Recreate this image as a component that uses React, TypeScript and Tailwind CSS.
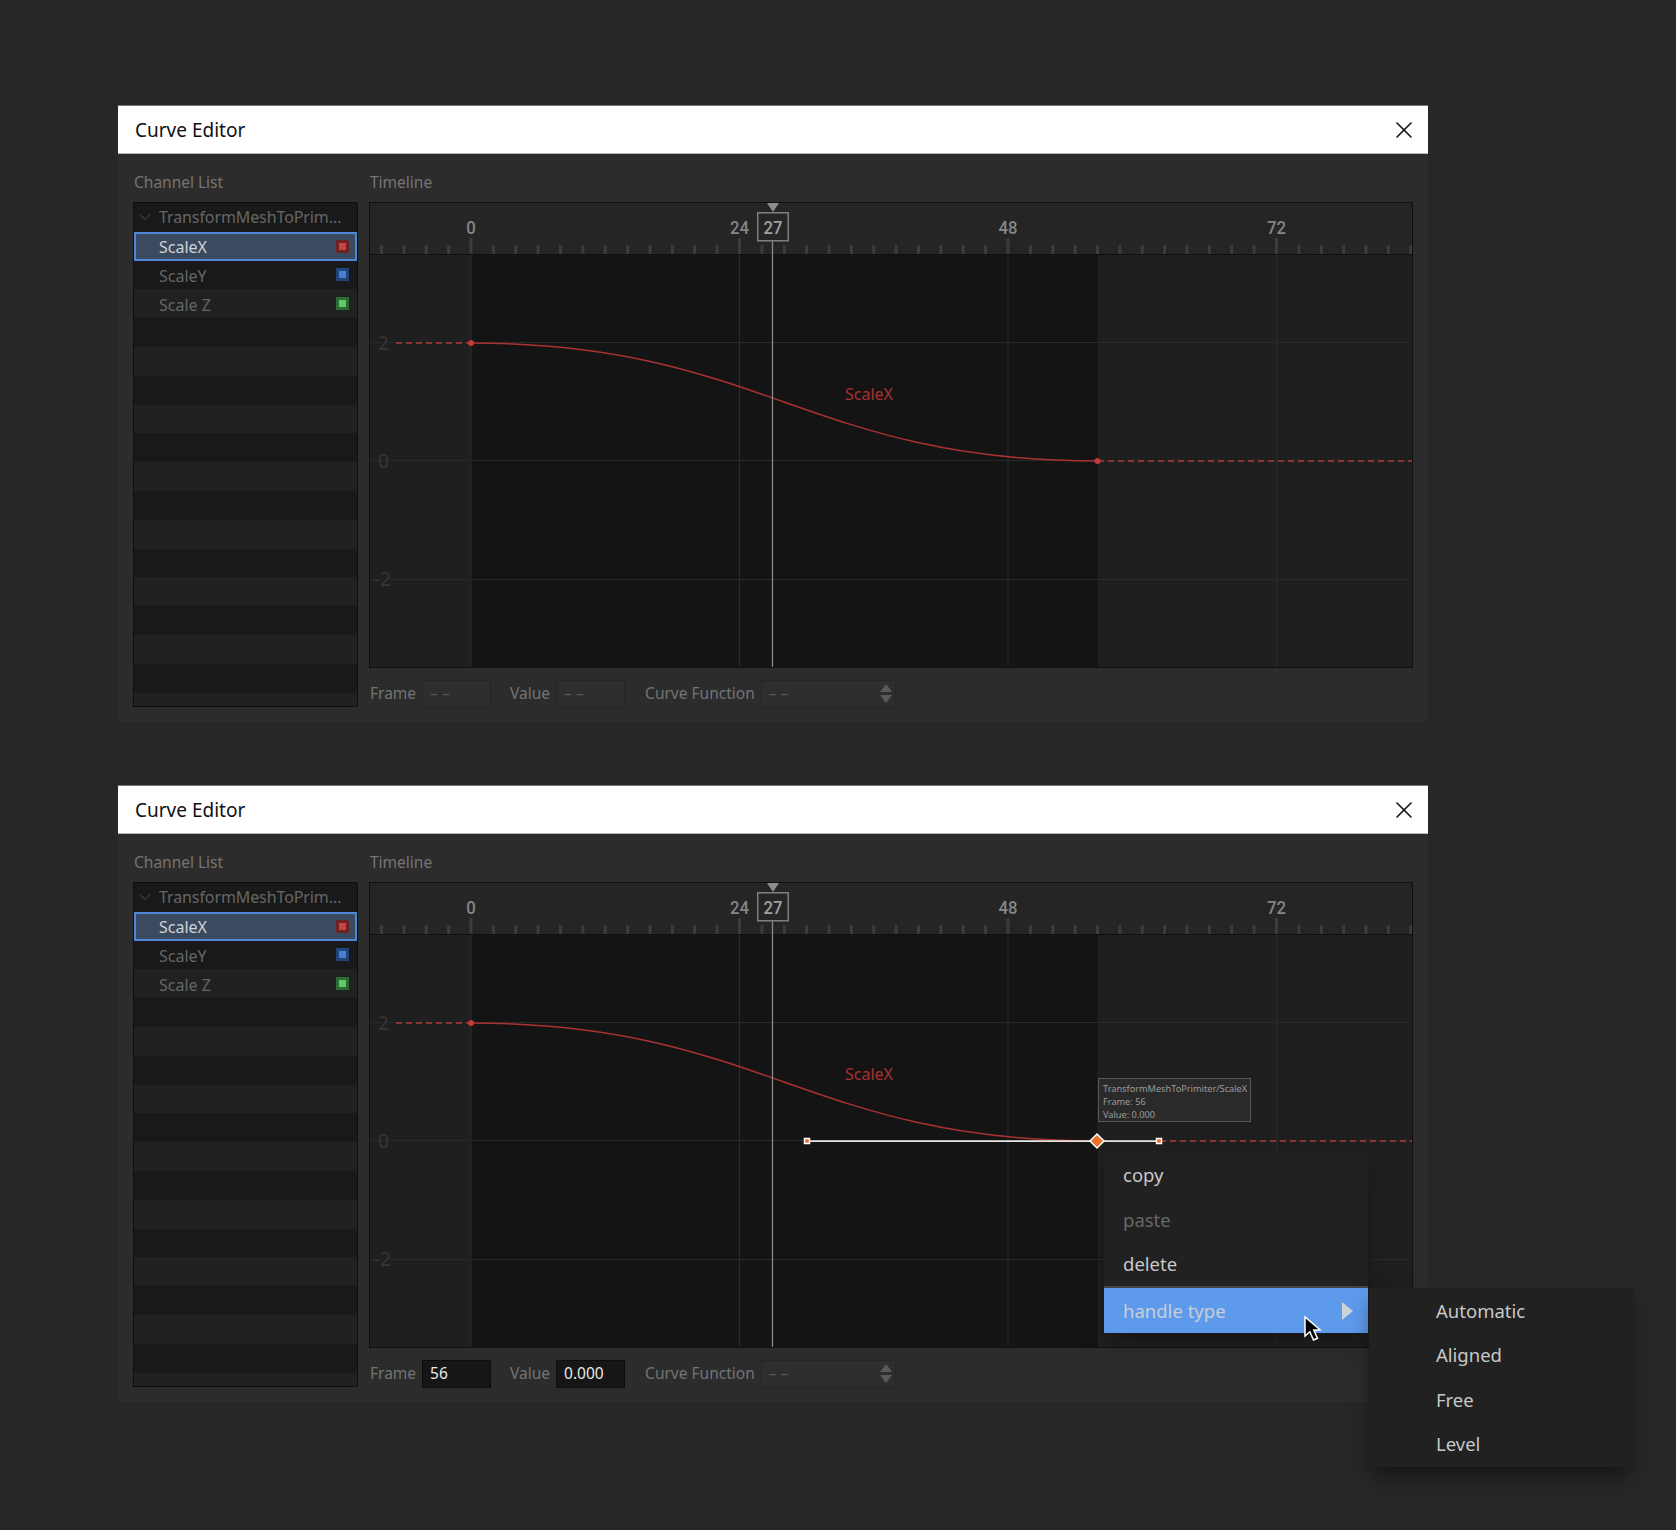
import { X, ChevronDown } from 'lucide-react'

const FRAME = 11.1875
const ORIGIN = 471
const ticks = Array.from({ length: 47 }, (_, i) => (i - 4) * 2)
const rowCount = 18

type Channel = { name: string; outer: string; inner: string }

const channels: Channel[] = [
  { name: 'ScaleX', outer: 'bg-[#6e2222]', inner: 'bg-[#c94343]' },
  { name: 'ScaleY', outer: 'bg-[#1f4579]', inner: 'bg-[#4a80d4]' },
  { name: 'Scale Z', outer: 'bg-[#2b6a33]', inner: 'bg-[#5fcb63]' },
]

function ChannelList() {
  return (
    <div className="h-[505px] overflow-hidden border border-[#0f0f0f] bg-[#19191a]">
      <div className="flex h-[28.8px] items-center text-[#666]">
        <ChevronDown size={20} strokeWidth={1} className="ml-[1px] text-[#5c5c5c]" />
        <span className="ml-[4px] whitespace-nowrap text-[16px] tracking-[-0.1px]">TransformMeshToPrim…</span>
      </div>
      {channels.map((channel, i) => (
        <div
          key={channel.name}
          className={
            i === 0
              ? 'flex h-[28.8px] items-center justify-between border-2 border-[#4f87d6] bg-[#3a4a60] pl-[23px] pr-[6px] text-[16px] text-[#d2d2d2]'
              : i === 1
                ? 'flex h-[28.8px] items-center justify-between pl-[25px] pr-[8px] text-[16px] text-[#666]'
                : 'flex h-[28.8px] items-center justify-between bg-[#212121] pl-[25px] pr-[8px] text-[16px] text-[#666]'
          }
        >
          <span className="pt-[2px]">{channel.name}</span>
          <span className={`flex size-[13px] items-center justify-center ${channel.outer}`}>
            <span className={`size-[7px] ${channel.inner}`} />
          </span>
        </div>
      ))}
      {Array.from({ length: rowCount - 4 }, (_, i) => (
        <div key={i} className={i % 2 === 0 ? 'h-[28.8px]' : 'h-[28.8px] bg-[#212121]'} />
      ))}
    </div>
  )
}

function RulerLabel({ x, text, fill = '#868686' }: { x: number; text: string; fill?: string }) {
  return (
    <text
      x={x}
      y="234"
      fill={fill}
      fontSize="19"
      fontWeight="500"
      textAnchor="middle"
      textLength={text.length * 9.5}
      lengthAdjust="spacingAndGlyphs"
      className="font-['Roboto',sans-serif]"
    >
      {text}
    </text>
  )
}

function Graph({ editing }: { editing: boolean }) {
  return (
    <div className="h-[466px] border border-[#0f0f0f]">
      <svg width="1042" height="464" viewBox="370 203 1042 464" className="block">
        <rect x="370" y="203" width="1042" height="51" fill="#252525" />
        <rect x="370" y="254" width="1042" height="413" fill="#1f1f1f" />
        <rect x={ORIGIN} y="254" width={56 * FRAME} height="413" fill="#141414" />

        {[342.5, 460.5, 579.5].map((y) => (
          <line key={y} x1="370" x2="1412" y1={y} y2={y} stroke="#292929" />
        ))}
        {[0, 24, 48, 72].map((f) => (
          <line key={f} x1={ORIGIN + f * FRAME} x2={ORIGIN + f * FRAME} y1="254" y2="667" stroke="#2b2b2b" />
        ))}

        {ticks.map((f) => (
          <rect
            key={f}
            x={ORIGIN + f * FRAME - 1.5}
            y={f % 24 === 0 ? 238 : 245}
            width="3"
            height={f % 24 === 0 ? 16 : 9}
            fill="#3c3c3c"
          />
        ))}
        <line x1="370" x2="1412" y1="254.5" y2="254.5" stroke="#0f0f0f" />

        <RulerLabel x={ORIGIN} text="0" />
        <RulerLabel x={ORIGIN + 24 * FRAME} text="24" />
        <RulerLabel x={ORIGIN + 48 * FRAME} text="48" />
        <RulerLabel x={ORIGIN + 72 * FRAME} text="72" />

        <g fill="#363636" fontSize="19">
          <text x="378" y="350">2</text>
          <text x="378" y="468">0</text>
          <text x="374" y="586">-2</text>
        </g>

        <line x1="396" x2={ORIGIN} y1="343" y2="343" stroke="#b03a3a" strokeWidth="1.5" strokeDasharray="6 4" />
        <line
          x1={editing ? 1160 : 1098}
          x2="1412"
          y1="461"
          y2="461"
          stroke="#b03a3a"
          strokeWidth="1.5"
          strokeDasharray="6 4"
        />
        <path d="M471 343 C761 343 807 461 1097.5 461" fill="none" stroke="#aa3232" strokeWidth="1.5" />
        <circle cx={ORIGIN} cy="343" r="3" fill="#c33b3b" />
        {!editing && <circle cx="1097.5" cy="461" r="3" fill="#c33b3b" />}

        <text x="845" y="400" fill="#a83232" fontSize="16">ScaleX</text>

        <line x1="772.5" x2="772.5" y1="241" y2="667" stroke="#8c8c8c" strokeWidth="1.25" />
        <path d="M767 203 H779 L773 212 Z" fill="#8c8c8c" />
        <rect x="757.75" y="212.75" width="30.5" height="28" fill="#252525" stroke="#808080" strokeWidth="1.5" />
        <RulerLabel x={773} text="27" fill="#a0a0a0" />

        {editing && (
          <g>
            <line x1="807" x2="1159" y1="461" y2="461" stroke="#e8e4e2" strokeWidth="1.75" />
            <rect x="804.5" y="458.5" width="5" height="5" fill="#e8722a" stroke="#fff" strokeWidth="1.5" />
            <rect x="1156.5" y="458.5" width="5" height="5" fill="#e8722a" stroke="#fff" strokeWidth="1.5" />
            <path d="M1097 454 L1104 461 L1097 468 L1090 461 Z" fill="#e8722a" stroke="#fff" strokeWidth="1.5" />
          </g>
        )}
      </svg>
    </div>
  )
}

function Field({ label, value, width }: { label: string; value: string | null; width: string }) {
  return (
    <div className="flex items-center gap-[6px]">
      <span className="text-[15.5px] text-[#747474]">{label}</span>
      <div
        className={
          value
            ? `flex h-[28px] items-center border border-[#0d0d0d] bg-[#161617] pl-[7px] text-[15.5px] text-[#e8e8e8] ${width}`
            : `flex h-[28px] items-center border border-[#262626] bg-[#2e2e2e] pl-[7px] text-[15.5px] text-[#555] ${width}`
        }
      >
        {value ?? '– –'}
      </div>
    </div>
  )
}

function ContextMenu() {
  return (
    <div className="absolute left-[986px] top-[368px] z-10 w-[264px] bg-[#212121] shadow-[0_10px_24px_-6px_rgba(0,0,0,0.45)]">
      <div className="flex h-[44px] items-center pl-[19px] text-[18.5px] text-[#c8c8c8]">copy</div>
      <div className="flex h-[45px] items-center pl-[19px] text-[18.5px] text-[#686868]">paste</div>
      <div className="flex h-[44px] items-center pl-[19px] text-[18.5px] text-[#c8c8c8]">delete</div>
      <div className="flex h-[47px] items-center justify-between border-t-2 border-[#454545] bg-[#5e9aeb] pl-[19px] pr-[15px] text-[18.5px] text-[#c9cfd6]">
        handle type
        <svg width="11" height="18" viewBox="0 0 11 18">
          <path d="M0 0 L11 9 L0 18 Z" fill="#cfd3d8" />
        </svg>
      </div>
      <div className="absolute left-[265px] top-[135px] h-[179px] w-[264px] bg-[#212121] pl-[67px] pt-[1px] text-[18.5px] text-[#c8c8c8] shadow-[0_12px_20px_-4px_rgba(0,0,0,0.5)]">
        <div className="flex h-[44px] items-center">Automatic</div>
        <div className="flex h-[44.5px] items-center">Aligned</div>
        <div className="flex h-[44.5px] items-center">Free</div>
        <div className="flex h-[44.5px] items-center">Level</div>
      </div>
      <svg width="20" height="28" viewBox="0 0 20 28" className="absolute left-[199px] top-[162px]">
        <path
          d="M2 2 L2 21 L6.8 16.8 L10.5 25 L14.5 23.3 L10.8 15.2 L17 14.8 Z"
          fill="#000"
          stroke="#fff"
          strokeWidth="1.5"
        />
      </svg>
    </div>
  )
}

function CurveEditor({ editing }: { editing: boolean }) {
  return (
    <section className="relative w-[1310px] bg-[#2c2c2c]">
      <header className="flex h-[49px] items-center justify-between border-y border-t-[#777] border-b-[#bbb] bg-white pl-[17px] pr-[10px] text-[19px] text-[#111]">
        <span className="pt-[2px]">Curve Editor</span>
        <X size={28} strokeWidth={1.3} />
      </header>
      <div className="flex gap-[11px] pb-[14px] pl-[15px] pr-[15px]">
        <div className="w-[225px]">
          <div className="flex h-[48px] items-center pl-[1px] pt-[10px] text-[15.5px] text-[#747474]">Channel List</div>
          <ChannelList />
        </div>
        <div className="w-[1044px]">
          <div className="flex h-[48px] items-center pl-[1px] pt-[10px] text-[15.5px] text-[#747474]">Timeline</div>
          <Graph editing={editing} />
          <div className="mt-[12px] flex pl-[1px]">
            <Field label="Frame" value={editing ? '56' : null} width="w-[69px]" />
            <div className="ml-[19px]">
              <Field label="Value" value={editing ? '0.000' : null} width="w-[69px]" />
            </div>
            <div className="relative ml-[20px]">
              <Field label="Curve Function" value={null} width="w-[135px]" />
              <svg width="12" height="20" viewBox="0 0 12 20" className="absolute right-[4px] top-[4px]">
                <path d="M6 0 L12 8 H0 Z M6 19 L0 11 H12 Z" fill="#5a5a5a" />
              </svg>
            </div>
          </div>
        </div>
      </div>
      {editing && (
        <>
          <div className="absolute left-[980px] top-[293px] h-[44px] w-[153px] border border-[#585858] bg-[#2a2a2a] px-[4px] py-[3px] text-[9.2px] leading-[13px] text-[#9a9a9a]">
            <div>TransformMeshToPrimiter/ScaleX</div>
            <div>Frame: 56</div>
            <div>Value: 0.000</div>
          </div>
          <ContextMenu />
        </>
      )}
    </section>
  )
}

export default function App() {
  return (
    <div className="flex min-h-[1530px] flex-col gap-[63px] overflow-hidden bg-[#272727] pl-[118px] pt-[105px] font-['Noto_Sans',sans-serif]">
      <CurveEditor editing={false} />
      <CurveEditor editing />
    </div>
  )
}
